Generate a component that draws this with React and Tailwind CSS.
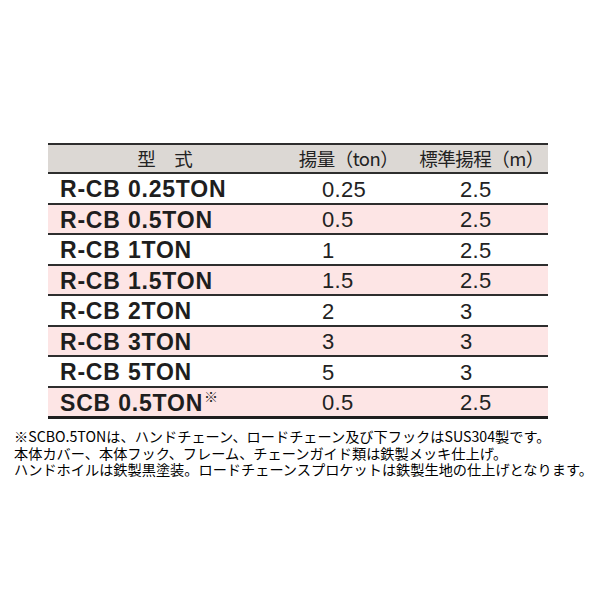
import React from "react";

const rows = [
  ["R-CB 0.25TON", "0.25", "2.5", false, "h-[29px]"],
  ["R-CB 0.5TON", "0.5", "2.5", true, "h-[28px]"],
  ["R-CB 1TON", "1", "2.5", false, "h-[29px]"],
  ["R-CB 1.5TON", "1.5", "2.5", true, "h-[28px]"],
  ["R-CB 2TON", "2", "3", false, "h-[29px]"],
  ["R-CB 3TON", "3", "3", true, "h-[28px]"],
  ["R-CB 5TON", "5", "3", false, "h-[29px]"],
];

const sans = { fontFamily: '"Liberation Sans", Arial, "Noto Sans CJK JP", sans-serif' };
const jp = { fontFamily: '"Noto Sans CJK JP", sans-serif' };

function Row({ model, ton, m, pink, mark, h }) {
  return (
    <div className={`flex shrink-0 items-center pt-[2px] ${h} ${pink ? "bg-[#fde5e5]" : "bg-white"}`}>
      <div className="w-[234px] pl-[12px] font-bold text-[23px] text-[#1e1e1e] leading-none tracking-[0.8px] whitespace-nowrap">
        {model}
        {mark && <span className="font-normal text-[14px] align-top relative top-[-3px] ml-[1px]" style={jp}>※</span>}
      </div>
      <div className="w-[133px] pl-[40px] text-[22px] text-[#222] leading-none tracking-[0.3px]">{ton}</div>
      <div className="w-[133px] pl-[45px] text-[22px] text-[#222] leading-none tracking-[0.3px]">{m}</div>
    </div>
  );
}

function Line() {
  return <div className="h-[2px] shrink-0 bg-[#2e2e2e]" />;
}

export default function App() {
  return (
    <div className="w-[600px] h-[600px] bg-white" style={sans}>
      <div className="pt-[143px] pl-[48px]">
        <div className="w-[500px] flex flex-col">
          <Line />
          <div className="flex shrink-0 items-center h-[27px] bg-[#dcd8d4] text-[18.5px] text-[#222]" style={jp}>
            <div className="w-[234px] text-center">型　式</div>
            <div className="w-[133px] text-center tracking-[-0.5px]">揚量（ton）</div>
            <div className="w-[133px] text-center tracking-[-0.5px]">標準揚程（m）</div>
          </div>
          <Line />
          {rows.map((r, i) => (
            <React.Fragment key={i}>
              <Row model={r[0]} ton={r[1]} m={r[2]} pink={r[3]} h={r[4]} />
              {i < rows.length - 1 && <Line />}
            </React.Fragment>
          ))}
          <Line />
          <Row model="SCB 0.5TON" ton="0.5" m="2.5" pink mark h="h-[28px]" />
          <div className="h-[3px] shrink-0 bg-[#1e1e1e]" />
        </div>
      </div>
      <div className="pl-[14px] pt-[9px] text-[14.2px] leading-[16.5px] text-black whitespace-nowrap" style={jp}>
        <div>※SCBO.5TONは、ハンドチェーン、ロードチェーン及び下フックはSUS304製です。</div>
        <div>本体カバー、本体フック、フレーム、チェーンガイド類は鉄製メッキ仕上げ。</div>
        <div>ハンドホイルは鉄製黒塗装。ロードチェーンスプロケットは鉄製生地の仕上げとなります。</div>
      </div>
    </div>
  );
}
